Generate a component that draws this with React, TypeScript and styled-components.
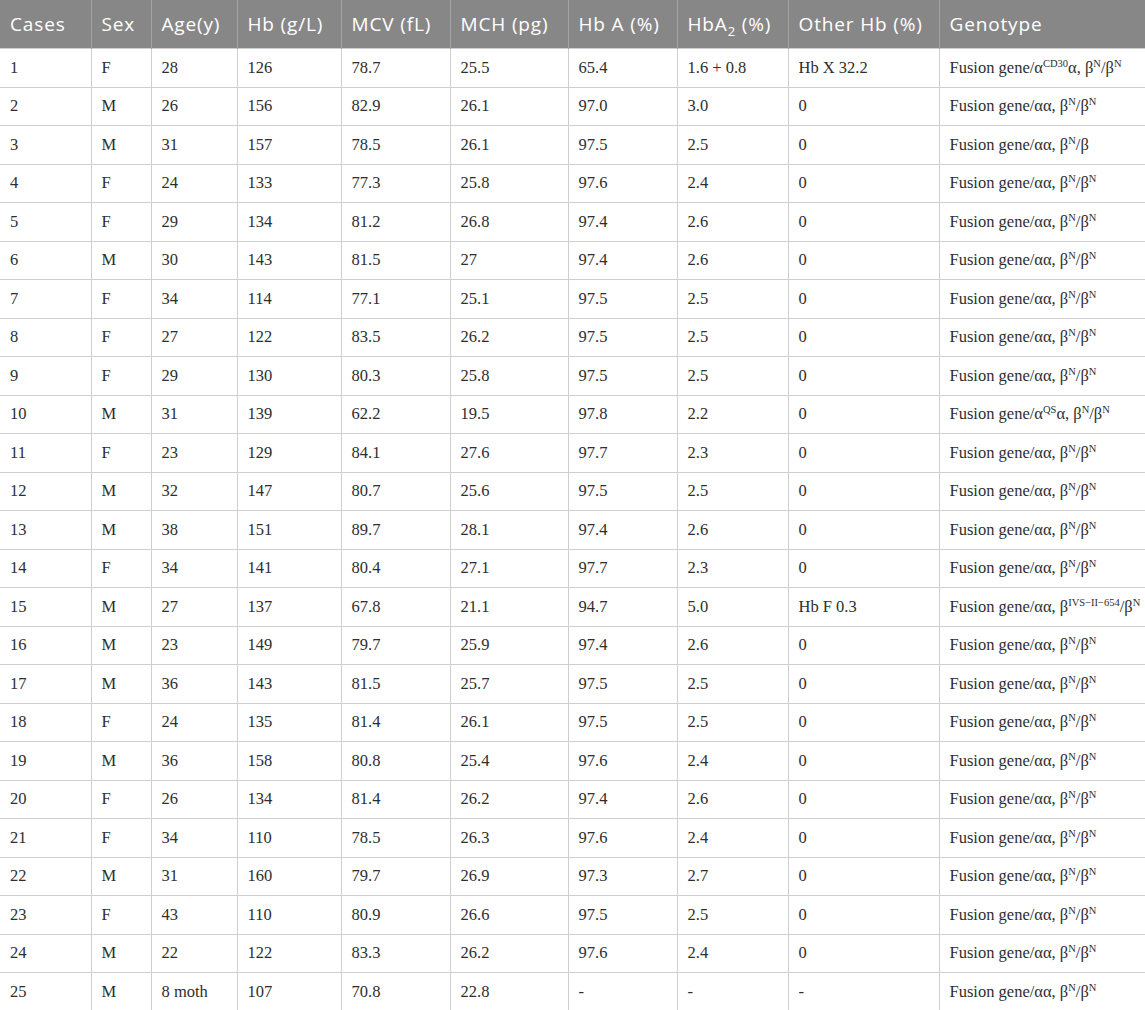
import React from "react";
import styled, { createGlobalStyle } from "styled-components";

const Global = createGlobalStyle`
  html, body { margin: 0; padding: 0; background: #ffffff; }
`;

const Table = styled.table`
  width: 1145px;
  border-collapse: collapse;
  table-layout: fixed;
`;

const HeadCell = styled.th`
  height: 48px;
  padding: 0 0 0 10px;
  background: #878787;
  color: #ffffff;
  font-family: "Open Sans", "Noto Sans", sans-serif;
  font-size: 19px;
  letter-spacing: 0.85px;
  font-weight: 400;
  text-align: left;
  white-space: nowrap;
  border-left: 1px solid #a3a3a3;
  &:first-child { border-left: none; }
`;

const Row = styled.tr`
  height: 38.5px;
`;

const Cell = styled.td`
  padding: 0 0 0 10px;
  font-family: "Liberation Serif", "Times New Roman", serif;
  font-size: 16.5px;
  color: #2e2e2e;
  white-space: nowrap;
  border: 1px solid #cfcfcf;
  &:first-child { border-left: none; }
`;

const Sup = styled.sup`
  font-size: 10.5px;
  line-height: 0;
  vertical-align: 6px;
`;

const Sub = styled.sub`
  font-size: 13px;
  line-height: 0;
  vertical-align: -5px;
`;

const widths = [91, 60, 86, 104, 109, 118, 109, 111, 151, 206];

type Geno = "n" | "cd30" | "qs" | "b" | "ivs";

const rows: [string, string, string, string, string, string, string, string, string, Geno][] = [
  ["1", "F", "28", "126", "78.7", "25.5", "65.4", "1.6 + 0.8", "Hb X 32.2", "cd30"],
  ["2", "M", "26", "156", "82.9", "26.1", "97.0", "3.0", "0", "n"],
  ["3", "M", "31", "157", "78.5", "26.1", "97.5", "2.5", "0", "b"],
  ["4", "F", "24", "133", "77.3", "25.8", "97.6", "2.4", "0", "n"],
  ["5", "F", "29", "134", "81.2", "26.8", "97.4", "2.6", "0", "n"],
  ["6", "M", "30", "143", "81.5", "27", "97.4", "2.6", "0", "n"],
  ["7", "F", "34", "114", "77.1", "25.1", "97.5", "2.5", "0", "n"],
  ["8", "F", "27", "122", "83.5", "26.2", "97.5", "2.5", "0", "n"],
  ["9", "F", "29", "130", "80.3", "25.8", "97.5", "2.5", "0", "n"],
  ["10", "M", "31", "139", "62.2", "19.5", "97.8", "2.2", "0", "qs"],
  ["11", "F", "23", "129", "84.1", "27.6", "97.7", "2.3", "0", "n"],
  ["12", "M", "32", "147", "80.7", "25.6", "97.5", "2.5", "0", "n"],
  ["13", "M", "38", "151", "89.7", "28.1", "97.4", "2.6", "0", "n"],
  ["14", "F", "34", "141", "80.4", "27.1", "97.7", "2.3", "0", "n"],
  ["15", "M", "27", "137", "67.8", "21.1", "94.7", "5.0", "Hb F 0.3", "ivs"],
  ["16", "M", "23", "149", "79.7", "25.9", "97.4", "2.6", "0", "n"],
  ["17", "M", "36", "143", "81.5", "25.7", "97.5", "2.5", "0", "n"],
  ["18", "F", "24", "135", "81.4", "26.1", "97.5", "2.5", "0", "n"],
  ["19", "M", "36", "158", "80.8", "25.4", "97.6", "2.4", "0", "n"],
  ["20", "F", "26", "134", "81.4", "26.2", "97.4", "2.6", "0", "n"],
  ["21", "F", "34", "110", "78.5", "26.3", "97.6", "2.4", "0", "n"],
  ["22", "M", "31", "160", "79.7", "26.9", "97.3", "2.7", "0", "n"],
  ["23", "F", "43", "110", "80.9", "26.6", "97.5", "2.5", "0", "n"],
  ["24", "M", "22", "122", "83.3", "26.2", "97.6", "2.4", "0", "n"],
  ["25", "M", "8 moth", "107", "70.8", "22.8", "-", "-", "-", "n"],
];

function Genotype({ kind }: { kind: Geno }) {
  switch (kind) {
    case "cd30":
      return (
        <>Fusion gene/α<Sup>CD30</Sup>α, β<Sup>N</Sup>/β<Sup>N</Sup></>
      );
    case "qs":
      return (
        <>Fusion gene/α<Sup>QS</Sup>α, β<Sup>N</Sup>/β<Sup>N</Sup></>
      );
    case "b":
      return <>Fusion gene/αα, β<Sup>N</Sup>/β</>;
    case "ivs":
      return (
        <>Fusion gene/αα, β<Sup>IVS−II−654</Sup>/β<Sup>N</Sup></>
      );
    default:
      return <>Fusion gene/αα, β<Sup>N</Sup>/β<Sup>N</Sup></>;
  }
}

export default function App() {
  return (
    <>
      <Global />
      <Table>
        <colgroup>
          {widths.map((w, i) => (
            <col key={i} style={{ width: w }} />
          ))}
        </colgroup>
        <thead>
          <tr>
            <HeadCell>Cases</HeadCell>
            <HeadCell>Sex</HeadCell>
            <HeadCell>Age(y)</HeadCell>
            <HeadCell>Hb (g/L)</HeadCell>
            <HeadCell>MCV (fL)</HeadCell>
            <HeadCell>MCH (pg)</HeadCell>
            <HeadCell>Hb A (%)</HeadCell>
            <HeadCell>HbA<Sub>2</Sub> (%)</HeadCell>
            <HeadCell>Other Hb (%)</HeadCell>
            <HeadCell>Genotype</HeadCell>
          </tr>
        </thead>
        <tbody>
          {rows.map((r) => (
            <Row key={r[0]}>
              {r.slice(0, 9).map((c, i) => (
                <Cell key={i}>{c}</Cell>
              ))}
              <Cell>
                <Genotype kind={r[9]} />
              </Cell>
            </Row>
          ))}
        </tbody>
      </Table>
    </>
  );
}
